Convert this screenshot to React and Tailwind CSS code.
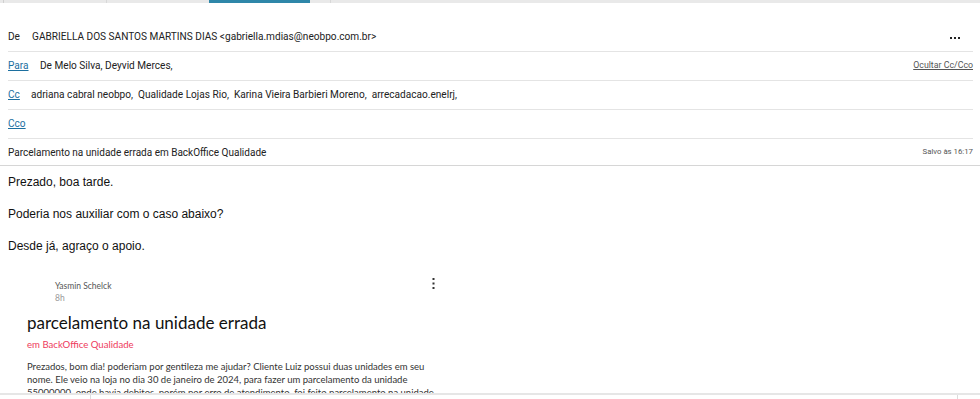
import React from "react";

function Dots() {
  return (
    <svg width="10" height="4" viewBox="0 0 10 4" className="text-[#222]">
      <rect x="0" y="1" width="2" height="2" fill="currentColor" />
      <rect x="4" y="1" width="2" height="2" fill="currentColor" />
      <rect x="8" y="1" width="2" height="2" fill="currentColor" />
    </svg>
  );
}

function Kebab() {
  return (
    <svg width="3" height="11" viewBox="0 0 3 11" className="text-[#333]">
      <rect x="0.5" y="0" width="2" height="2" fill="currentColor" />
      <rect x="0.5" y="4.5" width="2" height="2" fill="currentColor" />
      <rect x="0.5" y="9" width="2" height="2" fill="currentColor" />
    </svg>
  );
}

export default function App() {
  const roboto = { fontFamily: "Roboto, 'Liberation Sans', sans-serif" };
  return (
    <div className="w-[980px] h-[399px] overflow-hidden bg-white flex flex-col">
      {/* top tab strip */}
      <div className="h-[3px] flex bg-[#e9e9e9] shrink-0">
        <div className="w-[4px] border-r border-[#d0d0d0]" />
        <div className="w-[103px] border-r border-[#d8d8d8]" />
        <div className="w-[102px]" />
        <div className="w-[101px] bg-[#2f87a9]" />
        <div className="w-[21px] border-r border-[#d8d8d8]" />
      </div>

      <div className="flex-1 min-h-0 overflow-hidden" style={roboto}>
        <div className="pt-[20px] pl-[8px] pr-[7px] text-[10.1px] text-[#222]">
          <div className="h-[29px] flex items-center border-b border-[#e4e4e4]">
            <span className="w-[24px]">De</span>
            <span className="flex-1">GABRIELLA DOS SANTOS MARTINS DIAS &lt;gabriella.mdias@neobpo.com.br&gt;</span>
            <span className="mr-[13px] mt-[1px] flex items-center"><Dots /></span>
          </div>
          <div className="h-[29px] flex items-center border-b border-[#e4e4e4]">
            <span className="w-[32px] text-[#1c6f9f] underline">Para</span>
            <span className="flex-1">De Melo Silva, Deyvid Merces,</span>
            <span className="text-[8.8px] text-[#555] underline">Ocultar Cc/Cco</span>
          </div>
          <div className="h-[29px] flex items-center border-b border-[#e4e4e4]">
            <span className="w-[23px] text-[#1c6f9f] underline">Cc</span>
            <span className="whitespace-pre">adriana cabral neobpo,  Qualidade Lojas Rio,  Karina Vieira Barbieri Moreno,  arrecadacao.enelrj,</span>
          </div>
          <div className="h-[29px] flex items-center border-b border-[#e4e4e4]">
            <span className="text-[#1c6f9f] underline">Cco</span>
          </div>
        </div>
        <div className="h-[27px] flex items-center pl-[8px] pr-[7px] border-b border-[#d6d6d6] text-[10px] text-[#222]">
          <span className="flex-1">Parcelamento na unidade errada em BackOffice Qualidade</span>
          <span className="text-[7.8px] text-[#555]">Salvo às 16:17</span>
        </div>

        <div className="pl-[8px] pt-[8px] text-[12px] leading-[16px] text-[#111]" style={{ fontFamily: "'Liberation Sans', Arial, sans-serif" }}>
          <p>Prezado, boa tarde.</p>
          <p className="mt-[16px]">Poderia nos auxiliar com o caso abaixo?</p>
          <p className="mt-[16px]">Desde já, agraço o apoio.</p>
        </div>

        <div className="w-[440px] pl-[27px] pt-[26px]" style={{ fontFamily: "Lato, 'Noto Sans', sans-serif" }}>
          <div className="flex items-start">
            <div className="pl-[28px] flex-1 text-[8.5px] leading-[12px] text-[#555]">
              <div>Yasmin Schelck</div>
              <div className="text-[#999]">8h</div>
            </div>
            <div className="mr-[5px] -mt-[2px]"><Kebab /></div>
          </div>
          <div className="mt-[8px] text-[17px] leading-[22px] text-[#111]">parcelamento na unidade errada</div>
          <div className="mt-[4px] text-[9.6px] leading-[14px] text-[#ee3a5c]">em BackOffice Qualidade</div>
          <div className="mt-[8px] text-[9.5px] leading-[13px] text-[#333] whitespace-nowrap">
            <div>Prezados, bom dia! poderiam por gentileza me ajudar? Cliente Luiz possui duas unidades em seu</div>
            <div>nome. Ele veio na loja no dia 30 de janeiro de 2024, para fazer um parcelamento da unidade</div>
            <div>55000000, onde havia debitos, porém por erro de atendimento, foi feito parcelamento na unidade</div>
          </div>
        </div>
      </div>

      {/* bottom bar */}
      <div className="h-[6px] shrink-0 border-t-2 border-[#e6e6e6] flex">
        <div className="w-[90px]" />
        <div className="w-[1px] bg-[#dcdcdc]" />
        <div className="flex-1" />
        <div className="w-[1px] bg-[#dcdcdc]" />
        <div className="w-[22px]" />
      </div>
    </div>
  );
}
